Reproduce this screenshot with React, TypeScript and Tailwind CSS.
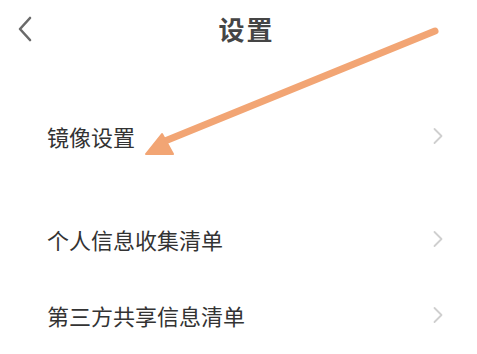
import React from "react";

const Chevron = () => (
  <svg width="12" height="18" viewBox="0 0 12 18" fill="none">
    <path d="M2.5 2 L9.5 9 L2.5 16" stroke="#cfcfcf" strokeWidth="1.8" strokeLinecap="round" strokeLinejoin="round" />
  </svg>
);

const Row = ({ label }: { label: string }) => (
  <div className="flex h-[78px] items-center justify-between pl-[47px] pr-[33px]">
    <span className="text-[22px] leading-none text-[#333333]">{label}</span>
    <Chevron />
  </div>
);

export default function App() {
  return (
    <div
      className="relative h-[354px] w-[477px] overflow-hidden bg-white"
      style={{ fontFamily: '"Noto Sans CJK SC", "Noto Sans", sans-serif' }}
    >
      <div className="relative flex h-[58px] items-center justify-center pl-[16px]">
        <div className="absolute left-[16px] top-[16px]">
          <svg width="18" height="26" viewBox="0 0 18 26" fill="none">
            <path d="M14 2 L4 13 L14 24" stroke="#6a6a6a" strokeWidth="2.6" strokeLinecap="round" strokeLinejoin="round" />
          </svg>
        </div>
        <span className="text-[26px] font-bold leading-none tracking-[2px] text-[#454545]">设置</span>
      </div>
      <div className="h-[39px]" />
      <Row label="镜像设置" />
      <div className="h-[25px]" />
      <Row label="个人信息收集清单" />
      <div className="-mt-[2px]" />
      <Row label="第三方共享信息清单" />
      <svg className="pointer-events-none absolute left-0 top-0" width="477" height="354" viewBox="0 0 477 354">
        <line x1="435" y1="31" x2="165" y2="141" stroke="#f2a574" strokeWidth="7" strokeLinecap="round" />
        <polygon points="146,154 162,134 173,154" fill="#f2a574" stroke="#f2a574" strokeWidth="2" strokeLinejoin="round" />
      </svg>
    </div>
  );
}
